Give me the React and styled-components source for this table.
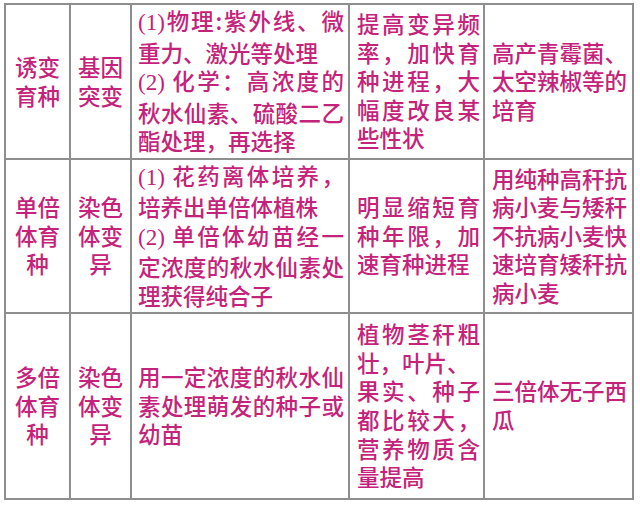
import React from 'react';
import styled, { createGlobalStyle } from 'styled-components';

const GlobalStyle = createGlobalStyle`
  html, body {
    margin: 0;
    padding: 0;
    background: #ffffff;
  }
  body {
    font-family: "Noto Sans CJK SC", "Noto Sans", sans-serif;
  }
`;

// 每行: [文字, 是否两端对齐, 是否带序号]
const rows = [
  [
    { center: true, lines: [['诱变'], ['育种']] },
    { center: true, lines: [['基因'], ['突变']] },
    {
      lines: [
        ['(1)物理:紫外线、微', true, true],
        ['重力、激光等处理'],
        ['(2) 化学：高浓度的', true, true],
        ['秋水仙素、硫酸二乙', true],
        ['酯处理，再选择'],
      ],
    },
    {
      lines: [
        ['提高变异频', true],
        ['率，加快育', true],
        ['种进程，大', true],
        ['幅度改良某', true],
        ['些性状'],
      ],
    },
    { lines: [['高产青霉菌、'], ['太空辣椒等的'], ['培育']] },
  ],
  [
    { center: true, lines: [['单倍'], ['体育'], ['种']] },
    { center: true, lines: [['染色'], ['体变'], ['异']] },
    {
      lines: [
        ['(1) 花药离体培养，', true, true],
        ['培养出单倍体植株'],
        ['(2) 单倍体幼苗经一', true, true],
        ['定浓度的秋水仙素处', true],
        ['理获得纯合子'],
      ],
    },
    {
      lines: [['明显缩短育', true], ['种年限，加', true], ['速育种进程']],
    },
    {
      lines: [
        ['用纯种高秆抗'],
        ['病小麦与矮秆'],
        ['不抗病小麦快'],
        ['速培育矮秆抗'],
        ['病小麦'],
      ],
    },
  ],
  [
    { center: true, lines: [['多倍'], ['体育'], ['种']] },
    { center: true, lines: [['染色'], ['体变'], ['异']] },
    {
      lines: [
        ['用一定浓度的秋水仙', true],
        ['素处理萌发的种子或', true],
        ['幼苗'],
      ],
    },
    {
      lines: [
        ['植物茎秆粗', true],
        ['壮，叶片、'],
        ['果实、种子', true],
        ['都比较大，', true],
        ['营养物质含', true],
        ['量提高'],
      ],
    },
    { lines: [['三倍体无子西'], ['瓜']] },
  ],
];

const Table = styled.div`
  display: grid;
  grid-template-columns: 65px 61px 218px 135px 149px;
  grid-template-rows: 155px 154px 186px;
  width: max-content;
  margin: 3px 0 0 4px;
  border-top: 2px solid #8e8e8e;
  border-left: 2px solid #8e8e8e;
  color: #c4237b;
  font-size: 22.5px;
  font-weight: 500;
  line-height: 28.6px;
`;

const Cell = styled.div`
  box-sizing: border-box;
  display: flex;
  flex-direction: column;
  justify-content: center;
  border-right: 2px solid #8e8e8e;
  border-bottom: 2px solid #8e8e8e;
  padding: ${(p) => (p.$center ? '0 1px' : p.$col === 2 ? '0 4px 0 6px' : '0 3px 0 7px')};
  padding-bottom: 2px;
  text-align: ${(p) => (p.$center ? 'center' : 'left')};
`;

const Line = styled.div`
  text-align: ${(p) => (p.$justify ? 'justify' : 'inherit')};
  text-align-last: ${(p) => (p.$justify ? 'justify' : 'auto')};
  white-space: ${(p) => (p.$justify ? 'normal' : 'nowrap')};
`;

const Num = styled.span`
  font-family: "Liberation Serif", "Noto Sans CJK SC", serif;
  font-weight: 400;
  font-size: 23px;
`;

const renderText = (text, hasNum) => {
  if (!hasNum) return text;
  const m = text.match(/^(\(\d\))(.*)$/);
  return (
    <>
      <Num>{m[1]}</Num>
      {m[2]}
    </>
  );
};

const App = () => (
  <>
    <GlobalStyle />
    <Table>
      {rows.map((row, r) =>
        row.map((cell, c) => (
          <Cell key={`${r}-${c}`} $center={cell.center} $col={c}>
            {cell.lines.map(([text, justify, hasNum], i) => (
              <Line key={i} $justify={justify}>
                {renderText(text, hasNum)}
              </Line>
            ))}
          </Cell>
        )),
      )}
    </Table>
  </>
);

export default App;
